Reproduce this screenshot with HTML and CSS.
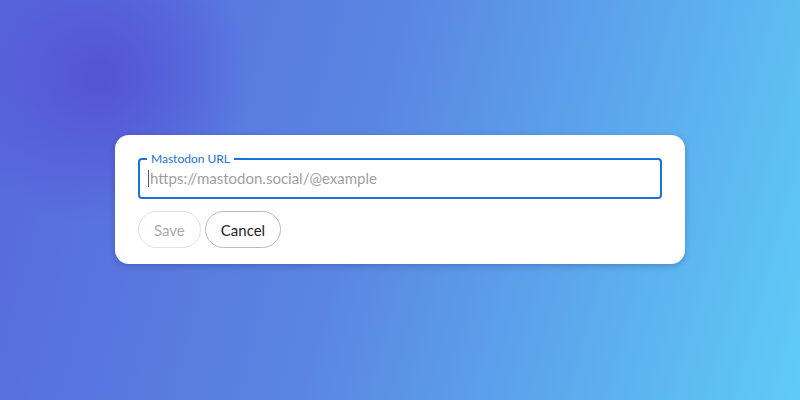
FILE: index.html
```html
<!DOCTYPE html>
<html lang="en">
<head>
    <meta charset="UTF-8">
    <meta name="viewport" content="width=device-width, initial-scale=1.0">
    <title>Mastodon URL</title>
    <link rel="stylesheet" href="styles.css">
</head>
<body>
    <div class="card">
        <fieldset class="field">
            <legend>Mastodon URL</legend>
            <input type="text" class="url" placeholder="https://mastodon.social/@example">
        </fieldset>
        <div class="actions">
            <button class="btn save" disabled>Save</button>
            <button class="btn">Cancel</button>
        </div>
    </div>
</body>
</html>
```

FILE: styles.css
```css
body {
    font-family: Lato, "Open Sans", sans-serif;
    display: flex;
    justify-content: center;
    align-items: center;
    box-sizing: border-box;
    height: 100vh;
    margin: 0;
    padding-bottom: 1px;
    background:
        radial-gradient(circle at 100px 75px, #5453d5 0, rgba(84, 83, 213, 0) 150px),
        linear-gradient(105deg, #5767dc 0%, #5a86e2 45%, #5ecbf7 100%);
}
.card {
    width: 524px;
    background: #ffffff;
    border-radius: 14px;
    padding: 16px 23px 16px;
    box-shadow: 0 2px 6px rgba(20, 30, 90, 0.25);
}
.field {
    margin: 0;
    padding: 0 8px 0 7px;
    border: 2px solid #1a73d9;
    border-radius: 4px;
}
.field legend {
    padding: 0 4px;
    font-size: 12px;
    line-height: 16px;
    color: #1a73d9;
}
/* caret drawn as a thin line, the field is shown focused */
.url {
    display: block;
    width: 100%;
    box-sizing: border-box;
    height: 30px;
    border: none;
    outline: none;
    padding: 2px 0 10px 3px;
    font-family: inherit;
    font-size: 15px;
    line-height: 18px;
    color: #222;
    background: linear-gradient(#555, #555) no-repeat 1px 3px / 1px 17px;
}
.url::placeholder {
    color: #a0a0a0;
}
.actions {
    display: flex;
    gap: 4px;
    margin-top: 12px;
}
.btn {
    height: 37px;
    padding: 0 15px;
    border: 1px solid #bcbcbc;
    border-radius: 19px;
    background: #ffffff;
    font-family: inherit;
    font-size: 15px;
    color: #1e1e1e;
    cursor: pointer;
}
.btn.save {
    border-color: #e0e0e0;
    color: #ababab;
    cursor: default;
}
```
